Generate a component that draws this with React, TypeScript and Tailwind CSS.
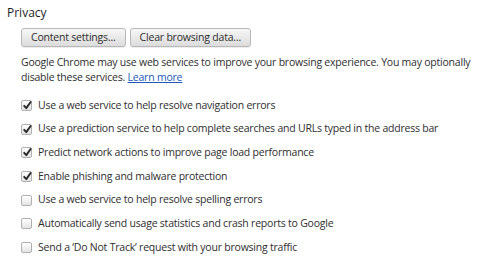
import React from "react";

const items: { label: string; checked: boolean }[] = [
  { label: "Use a web service to help resolve navigation errors", checked: true },
  { label: "Use a prediction service to help complete searches and URLs typed in the address bar", checked: true },
  { label: "Predict network actions to improve page load performance", checked: true },
  { label: "Enable phishing and malware protection", checked: true },
  { label: "Use a web service to help resolve spelling errors", checked: false },
  { label: "Automatically send usage statistics and crash reports to Google", checked: false },
  { label: "Send a \u2018Do Not Track\u2019 request with your browsing traffic", checked: false },
];

function Box({ checked }: { checked: boolean }) {
  return (
    <span className="relative flex h-[11px] w-[11px] shrink-0 items-center justify-center rounded-[2px] border border-[#b0b0b0] bg-gradient-to-b from-[#ffffff] to-[#e4e4e4] shadow-[inset_0_1px_0_#fff]">
      {checked && (
        <svg viewBox="0 0 12 12" className="absolute left-[0px] top-[-1px] h-[11px] w-[11px]">
          <path d="M2.4 6.4 L4.7 8.9 L9.4 2.2" fill="none" stroke="#2a2a2a" strokeWidth="2.1" strokeLinecap="round" strokeLinejoin="round" />
        </svg>
      )}
    </span>
  );
}

const btn =
  "h-[19px] rounded-[3px] border border-[#b8b8b8] bg-gradient-to-b from-[#f7f7f7] to-[#dcdcdc] px-[9px] text-[10.5px] leading-[17px] tracking-[-0.2px] text-[#2e2e2e] shadow-[0_1px_1px_rgba(0,0,0,0.08)]";

export default function App() {
  return (
    <div className="h-[261px] w-[480px] bg-white text-[#2e2e2e]" style={{ fontFamily: '"Open Sans", sans-serif' }}>
      <div className="px-[7px] pt-[5px] text-[12px] leading-[16px] text-[#1e1e1e]">Privacy</div>
      <div className="ml-[21px] mt-[7px] flex gap-[4px]">
        <button className={btn}>Content settings...</button>
        <button className={btn}>Clear browsing data...</button>
      </div>
      <p className="ml-[21px] mr-[4px] mt-[8px] text-[10.5px] leading-[15px] tracking-[-0.22px] text-[#2e2e2e]">
        Google Chrome may use web services to improve your browsing experience. You may optionally disable these services.{" "}
        <span className="text-[#2259b8] underline">Learn more</span>
      </p>
      <div className="ml-[21px] mt-[15px] flex flex-col gap-[12.7px]">
        {items.map((it) => (
          <div key={it.label} className="flex h-[11px] items-center gap-[6px] text-[10.5px] tracking-[-0.22px] text-[#2e2e2e]">
            <Box checked={it.checked} />
            <span className="whitespace-nowrap">{it.label}</span>
          </div>
        ))}
      </div>
    </div>
  );
}
